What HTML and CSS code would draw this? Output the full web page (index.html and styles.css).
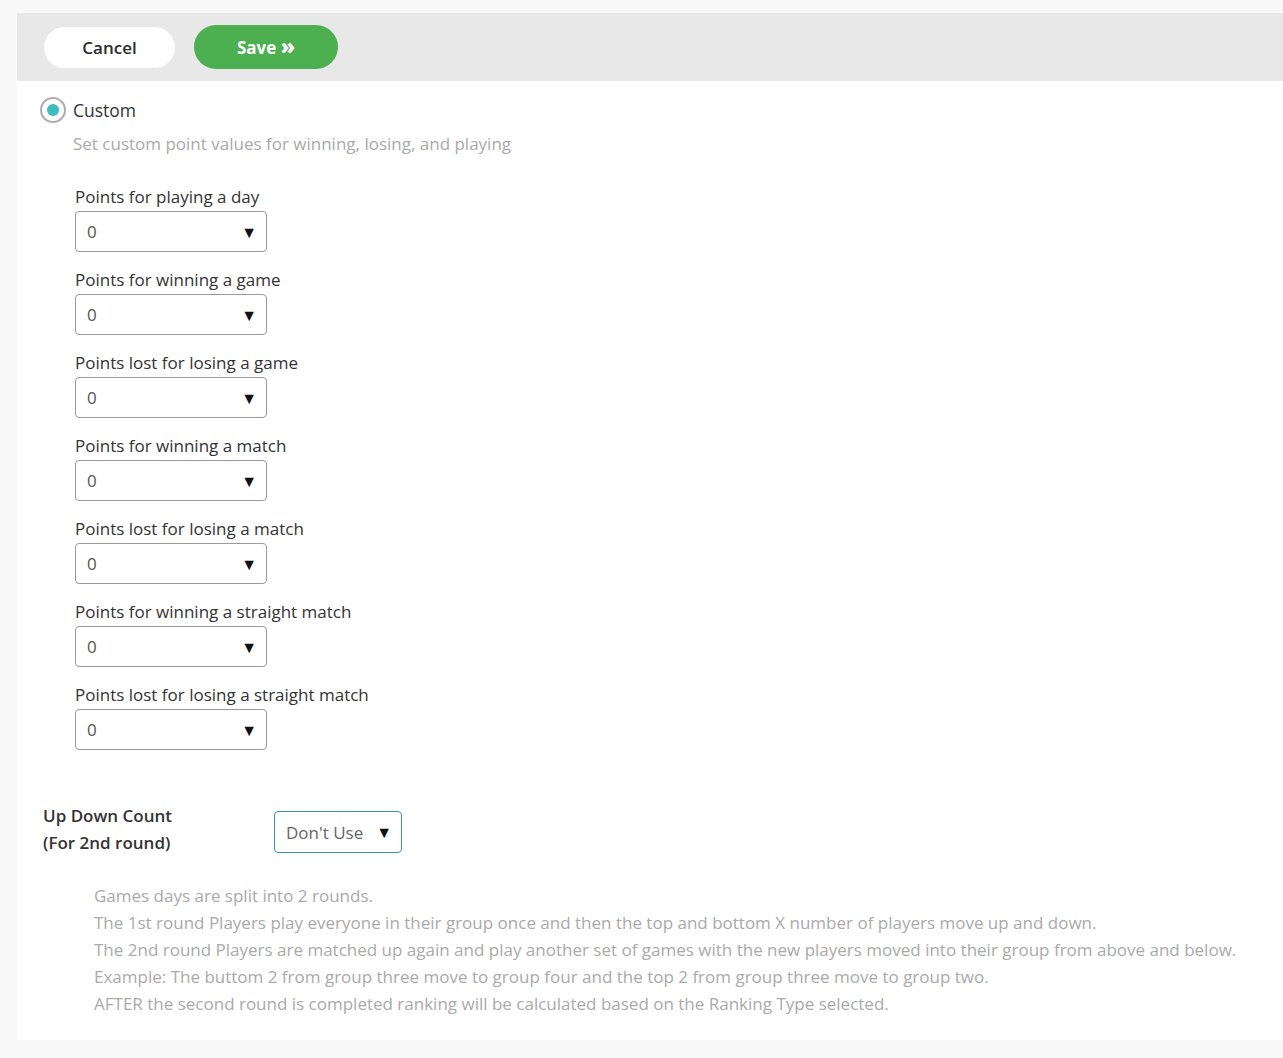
FILE: index.html
```html
<!DOCTYPE html>
<html>
<head>
<meta charset="utf-8">
<link rel="stylesheet" href="styles.css">
</head>
<body>
<div class="panel">
  <div class="toolbar">
    <button class="btn btn-cancel">Cancel</button>
    <button class="btn btn-save">Save <span class="chev">&raquo;</span></button>
  </div>
  <div class="content">
    <div class="radio-row">
      <span class="radio"><span class="dot"></span></span>
      <span class="radio-label">Custom</span>
    </div>
    <div class="hint">Set custom point values for winning, losing, and playing</div>
    <div class="fields">
      <div class="field">
        <div class="field-label">Points for playing a day</div>
        <div class="select"><span>0</span><span class="arrow">&#9660;</span></div>
      </div>
      <div class="field">
        <div class="field-label">Points for winning a game</div>
        <div class="select"><span>0</span><span class="arrow">&#9660;</span></div>
      </div>
      <div class="field">
        <div class="field-label">Points lost for losing a game</div>
        <div class="select"><span>0</span><span class="arrow">&#9660;</span></div>
      </div>
      <div class="field">
        <div class="field-label">Points for winning a match</div>
        <div class="select"><span>0</span><span class="arrow">&#9660;</span></div>
      </div>
      <div class="field">
        <div class="field-label">Points lost for losing a match</div>
        <div class="select"><span>0</span><span class="arrow">&#9660;</span></div>
      </div>
      <div class="field">
        <div class="field-label">Points for winning a straight match</div>
        <div class="select"><span>0</span><span class="arrow">&#9660;</span></div>
      </div>
      <div class="field">
        <div class="field-label">Points lost for losing a straight match</div>
        <div class="select"><span>0</span><span class="arrow">&#9660;</span></div>
      </div>
    </div>
    <div class="updown">
      <div class="updown-label">Up Down Count<br>(For 2nd round)</div>
      <div class="select select-blue"><span>Don't Use</span><span class="arrow">&#9660;</span></div>
    </div>
    <div class="notes">
      <div>Games days are split into 2 rounds.</div>
      <div>The 1st round Players play everyone in their group once and then the top and bottom X number of players move up and down.</div>
      <div>The 2nd round Players are matched up again and play another set of games with the new players moved into their group from above and below.</div>
      <div>Example: The buttom 2 from group three move to group four and the top 2 from group three move to group two.</div>
      <div>AFTER the second round is completed ranking will be calculated based on the Ranking Type selected.</div>
    </div>
  </div>
</div>
</body>
</html>
```

FILE: styles.css
```css
html, body {
  margin: 0;
  padding: 0;
  background: #f8f8f8;
}
body {
  font-family: "Open Sans", "Noto Sans", sans-serif;
  font-size: 17px;
  color: #333;
}
.panel {
  margin: 13px 0 0 17px;
  background: #fff;
  padding-bottom: 23px;
}
.toolbar {
  background: #e8e8e8;
  height: 68px;
  display: flex;
  align-items: center;
  padding-left: 27px;
  gap: 19px;
}
.btn {
  font-family: inherit;
  border: none;
  border-radius: 22px;
  font-size: 17px;
  cursor: pointer;
}
.btn-cancel {
  width: 131px;
  height: 41px;
  background: #fff;
  color: #2b2b2b;
  font-weight: 600;
}
.btn-save {
  width: 144px;
  height: 44px;
  background: #4caf50;
  color: #fff;
  font-weight: 700;
}
.chev {
  font-size: 21px;
  line-height: 1;
  font-weight: 800;
}
.content {
  padding: 16px 0 0 23px;
}
.radio-row {
  display: flex;
  align-items: center;
  gap: 7px;
}
.radio {
  width: 22px;
  height: 22px;
  border: 2px solid #a9adb1;
  border-radius: 50%;
  display: flex;
  align-items: center;
  justify-content: center;
}
.dot {
  width: 12px;
  height: 12px;
  border-radius: 50%;
  background: #3dbdbd;
}
.radio-label {
  font-size: 17.5px;
  color: #333;
}
.hint {
  margin: 9px 0 0 33px;
  color: #aaa;
  font-size: 17px;
}
.fields {
  margin: 30px 0 0 35px;
  display: flex;
  flex-direction: column;
  gap: 16px;
}
.field-label {
  font-size: 17px;
  color: #333;
  line-height: 24px;
  margin-bottom: 2px;
}
.select {
  width: 192px;
  height: 41px;
  box-sizing: border-box;
  border: 1px solid #9a9a9a;
  border-radius: 4px;
  display: flex;
  align-items: center;
  justify-content: space-between;
  padding: 0 9px 0 11px;
  font-size: 17px;
  color: #555;
}
.arrow {
  font-size: 16px;
  color: #111;
}
.updown {
  display: flex;
  align-items: flex-start;
  margin: 52px 0 0 3px;
}
.updown-label {
  width: 231px;
  font-size: 17px;
  font-weight: 600;
  color: #333;
  line-height: 27px;
}
.select-blue {
  width: 128px;
  height: 42px;
  margin-top: 9px;
  border-color: #3b8fd0;
  color: #666;
}
.notes {
  margin: 26px 0 0 54px;
  color: #aaa;
  font-size: 17px;
  line-height: 27px;
}
```
